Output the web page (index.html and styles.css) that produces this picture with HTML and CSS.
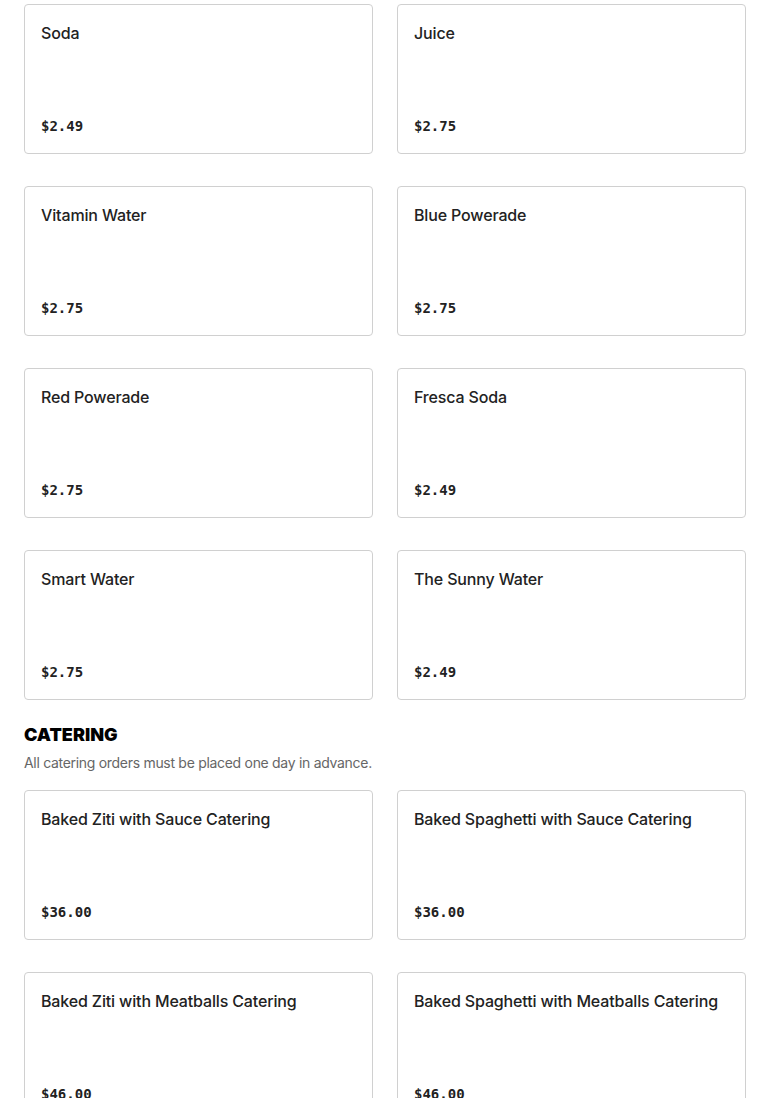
FILE: index.html
```html
<!DOCTYPE html>
<html>
<head>
<meta charset="utf-8">
<link rel="stylesheet" href="styles.css">
</head>
<body>
<div class="page">
  <div class="grid">
    <div class="card"><div class="name">Soda</div><div class="price">$2.49</div></div>
    <div class="card"><div class="name">Juice</div><div class="price">$2.75</div></div>
    <div class="card"><div class="name">Vitamin Water</div><div class="price">$2.75</div></div>
    <div class="card"><div class="name">Blue Powerade</div><div class="price">$2.75</div></div>
    <div class="card"><div class="name">Red Powerade</div><div class="price">$2.75</div></div>
    <div class="card"><div class="name">Fresca Soda</div><div class="price">$2.49</div></div>
    <div class="card"><div class="name">Smart Water</div><div class="price">$2.75</div></div>
    <div class="card"><div class="name">The Sunny Water</div><div class="price">$2.49</div></div>
  </div>
  <section class="section">
    <h2 class="section-title">CATERING</h2>
    <p class="section-desc">All catering orders must be placed one day in advance.</p>
    <div class="grid">
      <div class="card"><div class="name">Baked Ziti with Sauce Catering</div><div class="price">$36.00</div></div>
      <div class="card"><div class="name">Baked Spaghetti with Sauce Catering</div><div class="price">$36.00</div></div>
      <div class="card"><div class="name">Baked Ziti with Meatballs Catering</div><div class="price">$46.00</div></div>
      <div class="card"><div class="name">Baked Spaghetti with Meatballs Catering</div><div class="price">$46.00</div></div>
    </div>
  </section>
</div>
</body>
</html>
```
FILE: styles.css
```css
html, body {
  margin: 0;
  padding: 0;
  background: #fff;
}
.page {
  padding: 4px 24px 0 24px;
  font-family: "Inter", "Liberation Sans", sans-serif;
  color: #222;
}
.grid {
  display: grid;
  grid-template-columns: 1fr 1fr;
  column-gap: 24px;
  row-gap: 32px;
}
.card {
  box-sizing: border-box;
  height: 150px;
  border: 1px solid #d0d0d0;
  border-radius: 4px;
  padding: 16px 16px 17px 16px;
  display: flex;
  flex-direction: column;
  justify-content: space-between;
}
.name {
  font-size: 16px;
  line-height: 24px;
  font-weight: 500;
  letter-spacing: -0.15px;
  color: #222;
}
.price {
  font-family: "DejaVu Sans Mono", "Liberation Mono", monospace;
  font-size: 14px;
  line-height: 20px;
  font-weight: 700;
  color: #222;
}
.section {
  margin-top: 23px;
}
.section-title {
  margin: 0 0 6px 0;
  font-size: 18px;
  line-height: 24px;
  font-weight: 900;
  color: #000;
}
.section-desc {
  margin: 0 0 17px 0;
  font-size: 14px;
  line-height: 20px;
  letter-spacing: -0.3px;
  color: #666;
}
```
